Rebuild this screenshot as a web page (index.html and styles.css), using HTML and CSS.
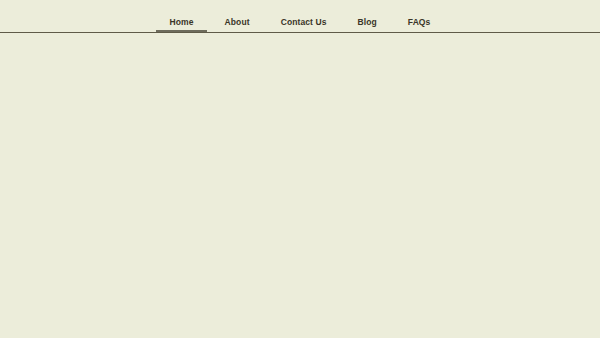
FILE: index.html
```html
<!DOCTYPE html>
<html lang="en">
<head>
    <meta charset="UTF-8">
    <meta name="viewport" content="width=device-width, initial-scale=1.0">
    <title>Home</title>
    <link rel="stylesheet" href="styles.css">
</head>
<body>
    <!-- Top navigation -->
    <nav class="top-nav">
        <a href="#" class="nav-link active">Home</a>
        <a href="#" class="nav-link">About</a>
        <a href="#" class="nav-link">Contact Us</a>
        <a href="#" class="nav-link">Blog</a>
        <a href="#" class="nav-link">FAQs</a>
    </nav>

    <main class="page-content"></main>
</body>
</html>
```
FILE: styles.css
```css
/* Overall layout */
body {
    margin: 0;
    height: 100vh;
    background: #ecedda;
    font-family: "Liberation Sans", Arial, sans-serif;
    color: #3a3528;
}

/* Navigation bar */
.top-nav {
    display: flex;
    justify-content: center;
    border-bottom: 1px solid #5f5b48;
    padding-top: 15px;
}

.nav-link {
    margin: 0 2px;
    padding: 2px 13.5px 3px;
    font-size: 8.5px;
    font-weight: bold;
    letter-spacing: 0.1px;
    color: #3a3528;
    text-decoration: none;
    border-bottom: 2px solid transparent;
}

.nav-link.active {
    border-bottom-color: #6e6c5c;
}
```
